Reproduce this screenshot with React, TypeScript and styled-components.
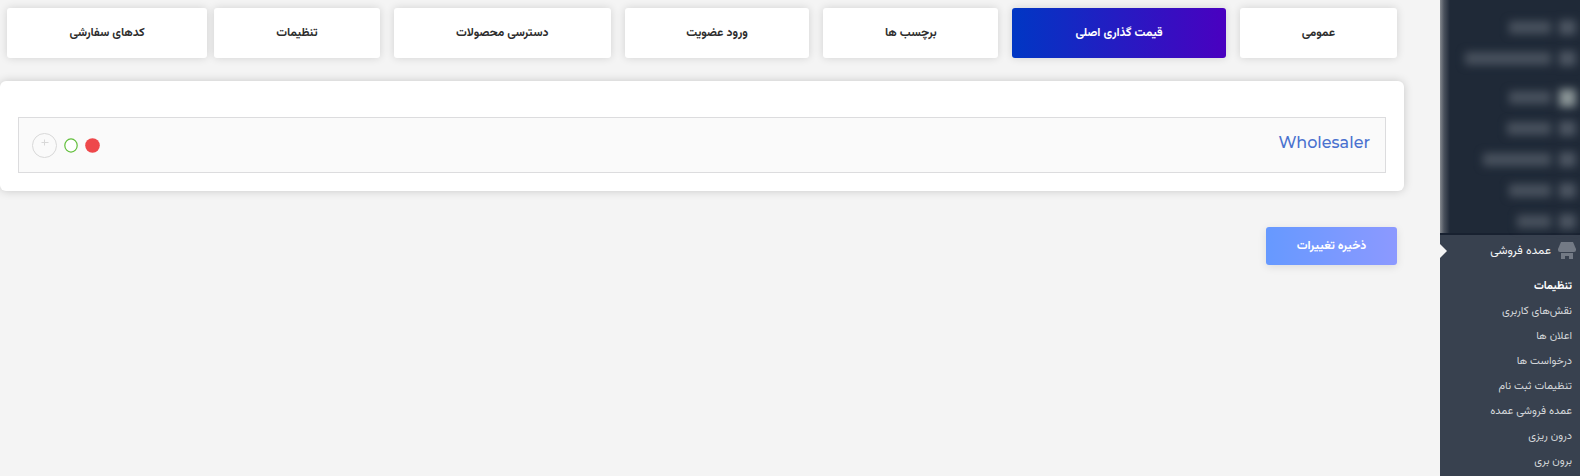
import React from "react";
import styled, { createGlobalStyle } from "styled-components";

const GlobalStyle = createGlobalStyle`
  *, *::before, *::after { box-sizing: border-box; }
  body {
    margin: 0;
    background: #f4f4f4;
    color: #2d2d2d;
    font-family: Vazirmatn, "DejaVu Sans Condensed", "DejaVu Sans", sans-serif;
    overflow: hidden;
  }
  button { font-family: inherit; cursor: pointer; }
  ul { margin: 0; padding: 0; list-style: none; }
`;

const Page = styled.div`
  display: flex;
  align-items: stretch;
  min-height: 100vh;
  max-height: 100vh;
`;

const Sidebar = styled.aside`
  flex: none;
  display: flex;
  flex-direction: column;
  width: 140px;
  background: #38414f;
  overflow: hidden;
`;

const HiddenMenu = styled.ul`
  flex: none;
  display: flex;
  flex-direction: column;
  gap: 16px;
  height: 235px;
  padding: 20px 4px 0 0;
  border-bottom: 2px solid #182130;
  background: linear-gradient(to left, #1f2937 130px, #4b525d 136px, #85898f 140px);
`;

const HiddenItem = styled.li<{ $spaced?: boolean }>`
  display: flex;
  align-items: center;
  gap: 8px;
  height: 15px;
  margin-top: ${(p) => (p.$spaced ? "8px" : "0")};
  filter: blur(4px);
`;

const HiddenIcon = styled.span<{ $bright?: boolean }>`
  width: 17px;
  height: ${(p) => (p.$bright ? "18px" : "15px")};
  background: ${(p) => (p.$bright ? "#8a9496" : "#4c5561")};
`;

const HiddenLabel = styled.span<{ $width: number }>`
  width: ${(p) => p.$width}px;
  height: 13px;
  background: #48515d;
`;

const CurrentMenu = styled.a`
  position: relative;
  display: flex;
  flex: none;
  align-items: center;
  gap: 7px;
  height: 32px;
  padding-right: 4px;
  color: #f3f4f5;
  font-size: 12px;
  line-height: 18px;
  text-decoration: none;
  white-space: nowrap;

  &::after {
    content: "";
    position: absolute;
    left: 0;
    top: 9px;
    border: 7px solid transparent;
    border-left-color: #f4f4f4;
    border-right-width: 0;
  }
`;

const SubMenu = styled.ul`
  padding: 7px 8px 0 0;
`;

const SubLink = styled.a<{ $active?: boolean }>`
  display: block;
  color: ${(p) => (p.$active ? "#ffffff" : "#d3d6d9")};
  font-size: 11px;
  font-weight: ${(p) => (p.$active ? 700 : 400)};
  line-height: 25px;
  text-decoration: none;
  white-space: nowrap;
`;

const Main = styled.main`
  flex: 1;
  min-width: 0;
  padding: 8px 36px 0 0;
`;

const Tabs = styled.nav`
  display: flex;
  gap: 7px;
  padding: 0 7px;
`;

const Tab = styled.button<{ $weight: number; $active?: boolean }>`
  flex: ${(p) => p.$weight} 1 0;
  min-width: 0;
  height: 50px;
  margin: 0;
  padding: 0;
  border: 0;
  border-radius: 3px;
  background: ${(p) => (p.$active ? "linear-gradient(to right, #0037c4, #4a00c0)" : "#ffffff")};
  box-shadow: 0 0 8px rgba(0, 0, 0, 0.14);
  color: ${(p) => (p.$active ? "#ffffff" : "#2d2d2d")};
  font-size: 12px;
  font-weight: 700;
  line-height: 18px;
  white-space: nowrap;

  &:not(:nth-last-child(-n + 2)) { margin-left: 7px; }
`;

const Panel = styled.section`
  margin-top: 23px;
  padding: 36px 18px 18px;
  border-radius: 6px;
  background: #ffffff;
  box-shadow: 0 0 10px rgba(0, 0, 0, 0.18);
`;

const RoleRow = styled.div`
  display: flex;
  align-items: center;
  justify-content: space-between;
  height: 56px;
  padding: 0 15px 0 13px;
  border: 1px solid #dcdcde;
  background: #fafafa;
`;

const RoleName = styled.h2`
  margin: 0;
  padding-bottom: 4px;
  color: #4a72cf;
  font-family: Montserrat, Inter, sans-serif;
  font-size: 16px;
  font-weight: 500;
  line-height: 24px;
`;

const Actions = styled.div`
  display: flex;
  align-items: center;
  gap: 7px;
`;

const IconButton = styled.button`
  display: flex;
  padding: 0;
  border: 0;
  background: none;
`;

const SaveButton = styled.button`
  display: block;
  width: 131px;
  height: 38px;
  margin: 36px 7px 0 0;
  padding: 0;
  border: 0;
  border-radius: 3px;
  background: linear-gradient(to right, #6699ff, #8c99ff);
  box-shadow: 0 2px 8px rgba(0, 0, 0, 0.1);
  color: #ffffff;
  font-size: 12px;
  font-weight: 700;
  line-height: 18px;
`;

const tabs = [
  { label: "عمومی", weight: 157 },
  { label: "قیمت گذاری اصلی", weight: 213, active: true },
  { label: "برچسب ها", weight: 175 },
  { label: "ورود عضویت", weight: 184 },
  { label: "دسترسی محصولات", weight: 217 },
  { label: "تنظیمات", weight: 165 },
  { label: "کدهای سفارشی", weight: 200 },
];

const hiddenItems = [
  { width: 42 },
  { width: 86 },
  { width: 42, bright: true, spaced: true },
  { width: 44 },
  { width: 68 },
  { width: 42 },
  { width: 34 },
];

const subItems = [
  "تنظیمات",
  "نقش‌های کاربری",
  "اعلان ها",
  "درخواست ها",
  "تنظیمات ثبت نام",
  "عمده فروشی عمده",
  "درون ریزی",
  "برون بری",
];

const StoreIcon = () => (
  <svg width="18" height="18" viewBox="0 0 18 18" fill="#737a85" aria-hidden="true">
    <path d="M3 0h12l3 7v1a2 2 0 0 1-2 2H2a2 2 0 0 1-2-2V7z" />
    <path d="M3 11h12v6h-4v-3H7v3H3z" />
  </svg>
);

export default function App() {
  return (
    <>
      <GlobalStyle />
      <Page dir="rtl" lang="fa">
        <Sidebar>
          <HiddenMenu aria-hidden="true">
            {hiddenItems.map((item, i) => (
              <HiddenItem key={i} $spaced={item.spaced}>
                <HiddenIcon $bright={item.bright} />
                <HiddenLabel $width={item.width} />
              </HiddenItem>
            ))}
          </HiddenMenu>
          <CurrentMenu href="#wholesale">
            <StoreIcon />
            عمده فروشی
          </CurrentMenu>
          <SubMenu>
            {subItems.map((label, i) => (
              <li key={label}>
                <SubLink href="#" $active={i === 0}>{label}</SubLink>
              </li>
            ))}
          </SubMenu>
        </Sidebar>
        <Main>
          <Tabs>
            {tabs.map((tab) => (
              <Tab key={tab.label} type="button" $weight={tab.weight} $active={tab.active}>
                {tab.label}
              </Tab>
            ))}
          </Tabs>
          <Panel>
            <RoleRow>
              <RoleName>Wholesaler</RoleName>
              <Actions>
                <IconButton type="button" aria-label="حذف">
                  <svg width="15" height="15" viewBox="0 0 15 15">
                    <circle cx="7.500" cy="7.500" r="7.300" fill="#ee484b" />
                  </svg>
                </IconButton>
                <IconButton type="button" aria-label="فعال">
                  <svg width="14" height="15" viewBox="0 0 14 15">
                    <ellipse cx="7" cy="7.500" rx="6.200" ry="6.600" fill="#fff" stroke="#62bf3c" strokeWidth="1.200" />
                  </svg>
                </IconButton>
                <IconButton type="button" aria-label="باز کردن">
                  <svg width="25" height="25" viewBox="0 0 25 25" fill="none" stroke="#d8d8d8">
                    <circle cx="12.500" cy="12.500" r="12" />
                    <path d="M9.500 9.500h7M12.500 6.500v6" />
                  </svg>
                </IconButton>
              </Actions>
            </RoleRow>
          </Panel>
          <SaveButton type="button">ذخیره تغییرات</SaveButton>
        </Main>
      </Page>
    </>
  );
}
